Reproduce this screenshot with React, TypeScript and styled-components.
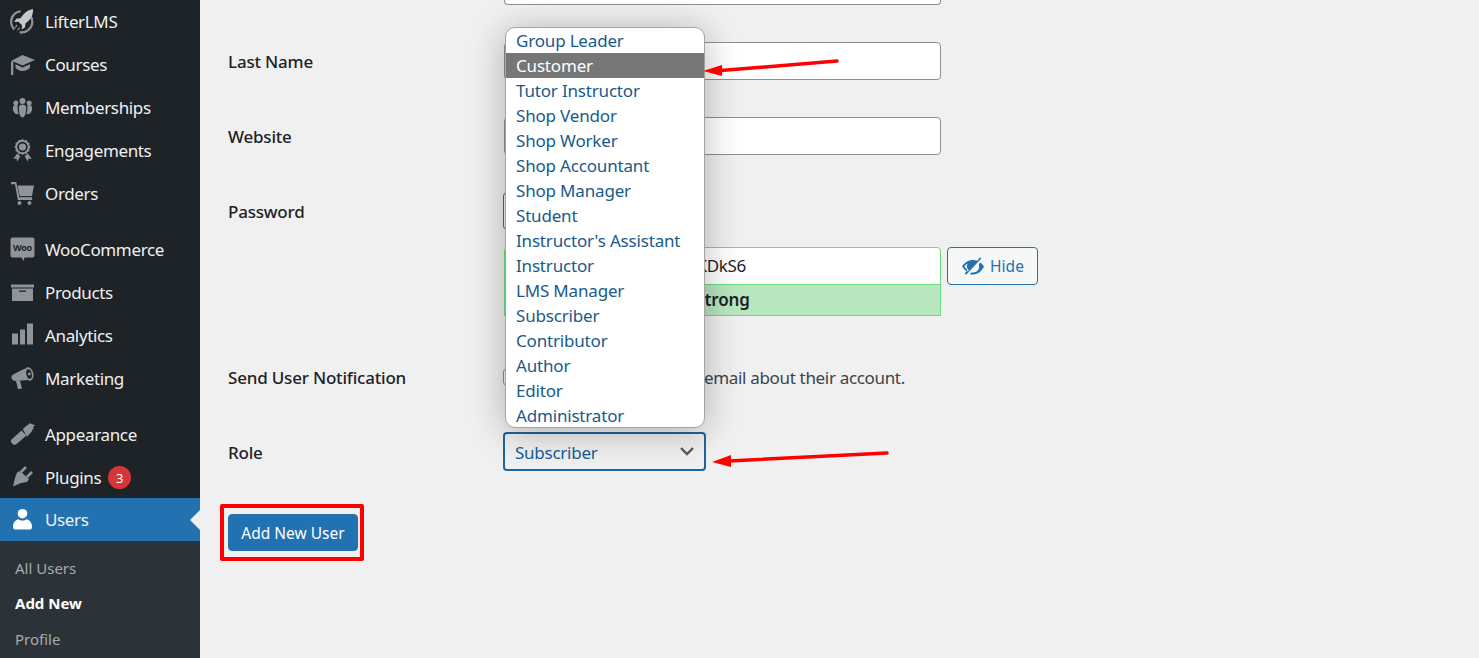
import React from "react";
import styled, { createGlobalStyle } from "styled-components";

const Global = createGlobalStyle`
  html, body { margin: 0; padding: 0; height: 658px; overflow: hidden; background: #f0f0f1; }
  body { font-family: "Noto Sans", "Open Sans", "Liberation Sans", sans-serif; }
  * { box-sizing: border-box; }
`;

const Page = styled.div`display: flex; height: 658px; overflow: hidden;`;
const Sidebar = styled.nav`width: 200px; flex: none; background: #1d2327; display: flex; flex-direction: column;`;
const Group = styled.ul`list-style: none; margin: 0 0 13px; padding: 0; display: flex; flex-direction: column;`;
const Item = styled.li<{ $active?: boolean }>`
  position: relative; height: 43px; display: flex; align-items: center; gap: 10px; padding-left: 10px;
  font-size: 17px; letter-spacing: -0.35px; color: #f0f0f1;
  background: ${p => (p.$active ? "#2271b1" : "transparent")};
  ${p => (p.$active ? "margin-top: -1px;" : "")}
  svg { flex: none; width: 25px; height: 25px; fill: ${p => (p.$active ? "#fff" : "#8f9499")}; }
  ${p => p.$active && `&::after { content: ""; position: absolute; right: 0; top: 12px; border: 10px solid transparent; border-right-color: #f0f0f1; border-left-width: 0; }`}
`;
const Badge = styled.span`
  width: 23px; height: 23px; margin-left: -3px; border-radius: 50%; background: #d63638; color: #fff;
  font-size: 13px; display: flex; align-items: center; justify-content: center; letter-spacing: 0;
`;
const SubMenu = styled.ul`list-style: none; margin: -13px 0 0; padding: 9px 0 0 15px; flex: 1; background: #2c3338;`;
const SubItem = styled.li<{ $current?: boolean }>`
  height: 35.5px; display: flex; align-items: center; font-size: 15px;
  color: ${p => (p.$current ? "#fff" : "#a7aaad")}; font-weight: ${p => (p.$current ? 700 : 400)};
`;

const Main = styled.main`position: relative; flex: 1; padding-left: 28px; display: flex; flex-direction: column;`;
const Row = styled.div<{ $mt?: number; $h?: number }>`
  display: grid; grid-template-columns: 275px 1fr; align-items: center;
  margin-top: ${p => p.$mt ?? 37}px; ${p => (p.$h ? `height: ${p.$h}px;` : "")}
`;
const Label = styled.label`font-size: 17px; font-weight: 500; color: #1d2327; letter-spacing: -0.2px;`;
const RoleLabel = styled(Label)`margin-top: 2px;`;
const CutInput = styled.div`margin-left: 276px; width: 437px; height: 5px; background: #fff; border: 1px solid #8c8f94; border-top: none; border-radius: 0 0 4px 4px;`;
const Input = styled.div`width: 437px; height: 38px; margin-left: 1px; background: #fff; border: 1px solid #8c8f94; border-radius: 4px;`;
const PasswordCell = styled.div`display: flex; flex-direction: column; align-self: start; padding-left: 1px;`;
const PasswordLabel = styled(Label)`align-self: start; margin-top: 8px;`;
const SetButton = styled.div`width: 180px; height: 38px; margin-left: -1px; border: 1px solid #2271b1; border-radius: 4px; background: #f6f7f7;`;
const PassLine = styled.div`display: flex; gap: 6px; margin-top: 17px;`;
const PassInput = styled.div`
  width: 437px; height: 38px; background: #fff; border: 1px solid #68de7c; border-radius: 4px 4px 0 0;
  font-size: 17px; line-height: 35px; color: #1d2327; white-space: nowrap; overflow: hidden; display: flex; justify-content: flex-end; padding-right: 194px;
  letter-spacing: -0.3px;
`;
const HideButton = styled.div`
  width: 91px; height: 38px; background: #f6f7f7; border: 1px solid #2271b1; border-radius: 4px; color: #2271b1;
  display: flex; align-items: center; justify-content: center; gap: 5px; font-size: 15.5px;
  svg { width: 24px; height: 24px; fill: #2271b1; }
`;
const Strength = styled.div`
  width: 437px; height: 31px; background: #b8e6bf; border: 1px solid #68de7c; border-top: none;
  font-size: 17px; font-weight: 600; color: #1d2327; text-align: center; line-height: 30px; letter-spacing: -0.1px;
`;
const CheckCell = styled.div`display: flex; align-items: center; font-size: 17px; color: #3c434a; letter-spacing: -0.33px;`;
const Checkbox = styled.span`width: 18px; height: 18px; margin-right: 183px; background: #fff; border: 1px solid #8c8f94; border-radius: 4px; flex: none;`;
const SelectWrap = styled.div`position: relative; width: 203px; height: 39px;`;
const Select = styled.div`
  height: 39px; border: 2px solid #1b66a0; border-radius: 4px; background: #f0f0f1; color: #135e96;
  display: flex; align-items: center; justify-content: space-between; padding: 1px 9px 0 10px; font-size: 17px; letter-spacing: -0.25px;
  svg { width: 16px; height: 16px; margin-top: -2px; stroke: #50575e; fill: none; stroke-width: 2.3; }
`;
const Dropdown = styled.ul`
  position: absolute; left: 2px; bottom: 43px; width: 200px; height: 401px; margin: 0; padding: 0; list-style: none; z-index: 5;
  background: #fff; border: 1px solid #a3a3a3; border-radius: 10px; overflow: hidden;
  box-shadow: 0 4px 36px rgba(0, 0, 0, 0.28);
`;
const Option = styled.li<{ $on?: boolean }>`
  height: 25px; padding-left: 10px; font-size: 17px; line-height: 25px; white-space: nowrap; letter-spacing: -0.18px;
  background: ${p => (p.$on ? "#767676" : "transparent")}; color: ${p => (p.$on ? "#fff" : "#185a8c")};
`;
const Submit = styled.button`
  position: relative; display: block; width: 130px; height: 37px; margin-top: 43px; padding: 0; border: 1px solid #2271b1; border-radius: 4px;
  background: #2271b1; color: #fff; font: 400 15.5px "Noto Sans", sans-serif; letter-spacing: 0;
  &::after { content: ""; position: absolute; inset: -11px -7px -11px -9px; border: 4px solid #f00; border-radius: 2px; }
`;
const Arrow = styled.svg<{ $x: number; $y: number }>`
  position: absolute; left: ${p => p.$x}px; top: ${p => p.$y}px; width: 190px; height: 24px; z-index: 6; overflow: visible;
`;

const DARK = "#1d2327";
const GREY = "#8f9499";

const icons: Record<string, React.ReactNode> = {
  rocket: (
    <>
      <circle cx="11.7" cy="12.8" r="10.6" fill="none" stroke={GREY} strokeWidth="2.2" strokeDasharray="26 6 24 12" transform="rotate(-40 11.7 12.8)" />
      <path fill="#c6c8ca" d="M23 0c-3.700.6-7 2.500-9.600 5.500L10.300 9.200 6.300 9.700 4.200 13l4.300-.3 3.500 3.500-.3 4.300 3.300-2.100.5-4 3.700-3.100C21.700 9 23.300 4.300 23 0z" />
      <path fill={GREY} d="M6.300 15.500l1.300 1.300-3.800 4zM9 18.200l1.200 1.200-3.800 3.200z" />
    </>
  ),
  cap: (
    <>
      <path d="M1 9 12.500 3 25 8 12.500 13.500 5 10.300z" />
      <path d="M5.500 12.300l7 3.200 7.500-3.200v3.200c-1.700 2.300-4.500 3.500-7.500 3.500s-5.500-1.200-7-3.200z" />
      <path d="M1 9.500h2.300V23H1z" />
    </>
  ),
  groups: (
    <>
      <circle cx="12.5" cy="6" r="3" />
      <circle cx="5.800" cy="8" r="2.500" />
      <circle cx="19.200" cy="8" r="2.500" />
      <path d="M8.800 12.500c0-2 1.700-3 3.700-3s3.700 1 3.700 3c0 4.500-1 10-3.700 10S8.800 17 8.800 12.500zM3 12c.5-1.300 1.700-1.900 3-1.900.8 0 1.300.2 1.700.4-.3 2.800 0 6.400 1 8.500-.6.300-1.300.3-2 .1C3.800 18.600 2.500 15 3 12zM22 12c-.5-1.300-1.700-1.900-3-1.900-.8 0-1.300.2-1.700.4.300 2.800 0 6.400-1 8.500.6.300 1.300.3 2 .1C21.200 18.600 22.500 15 22 12z" />
    </>
  ),
  award: (
    <>
      <path fillRule="evenodd" d="M12.500 1l1.800 1.300 2.200-.2 1 2 2 1-.2 2.200L20.600 9l-1.300 1.800.2 2.200-2 1-1 2-2.200-.2-1.800 1.300-1.800-1.300-2.200.2-1-2-2-1 .2-2.200L4.400 9l1.300-1.900-.2-2.200 2-1 1-2 2.200.2zM12.500 3.800a5.200 5.200 0 1 0 0 10.400 5.200 5.200 0 0 0 0-10.400z" />
      <circle cx="12.500" cy="9" r="3.600" />
      <path d="M7 15.800l1.200.2 1 1.800 1.500-.2-3.300 6-1-3.100-3.200.5zM18 15.800l-1.200.2-1 1.800-1.500-.2 3.300 6 1-3.100 3.200.5z" />
    </>
  ),
  cart: (
    <>
      <path d="M1 1h5.200l3.200 14.500H22v0l.2 3.500H7.800L5 3.200H1z" />
      <path d="M7.500 4.500H24l-2 10.500H9.800z" />
      <rect x="9" y="15.200" width="14" height="1" fill={DARK} />
      <circle cx="9.500" cy="22" r="2" />
      <circle cx="19.500" cy="22" r="2" />
    </>
  ),
  box: (
    <>
      <path d="M1 4.500h23v3H1zM2 8.500h21V21H2z" />
      <rect x="9" y="10.500" width="7" height="1.300" fill={DARK} />
    </>
  ),
  bars: (
    <>
      <rect x="2" y="10.500" width="6" height="11" />
      <rect x="10" y="6.500" width="5" height="15" />
      <rect x="17" y=".5" width="6" height="21" />
    </>
  ),
  mega: (
    <>
      <path d="M1.500 12C1.200 10 2.200 8.800 4 8L15 2.500 18 14 6 15C3.500 15 2 14 1.500 12z" />
      <path d="M6 15l4-.3 2 7.800-4 .8z" />
      <ellipse cx="19" cy="8" rx="4.400" ry="6.800" transform="rotate(-12 19 8)" />
      <ellipse cx="19" cy="8" rx="2.700" ry="4.800" transform="rotate(-12 19 8)" fill={DARK} />
      <circle cx="19.300" cy="8" r="1.400" />
    </>
  ),
  brush: (
    <>
      <path d="M1 18l10.500-9.500 5 5L6 22.500C5 23 3.800 23 3 22.200L1.300 20.500C.8 19.800.7 18.700 1 18z" />
      <path d="M12.800 7.300l3-3 4.200-3 5 2-2 2 1 1.500-1.500.5-.5 2-5 5.500z" />
    </>
  ),
  plug: (
    <>
      <path d="M3 21.500 5 13 7 7.500 10 6 19 14 17 17 11 18z" />
      <path d="M11 7l5-5M17 12l5-5" stroke={GREY} strokeWidth="2.600" fill="none" />
    </>
  ),
  user: (
    <>
      <circle cx="12.500" cy="6.700" r="4.800" />
      <path d="M3 20.500c-.3-4.500 2-7.300 5.300-8.300 2.200 1.700 6.200 1.700 8.400 0 3.300 1 5.600 3.800 5.300 8.300-.1.800-.8 2-2 2H5c-1.200 0-1.900-1.200-2-2z" />
    </>
  ),
};

const Icon = ({ n }: { n: string }) => <svg viewBox="0 0 25 25">{icons[n]}</svg>;
const WooIcon = () => (
  <svg viewBox="0 0 25 25">
    <path d="M2.500 .5h20a2 2 0 0 1 2 2v16a2 2 0 0 1-2 2h-8l-1 3.500-2-3.500h-9a2 2 0 0 1-2-2v-16a2 2 0 0 1 2-2z" />
    <text x="12.500" y="13.500" textAnchor="middle" fontSize="9" fontWeight="700" fill={DARK} fontFamily="Noto Sans, sans-serif" letterSpacing="-.3">Woo</text>
  </svg>
);

const groups: { n?: string; label: string; woo?: boolean }[][] = [
  [{ n: "rocket", label: "LifterLMS" }, { n: "cap", label: "Courses" }, { n: "groups", label: "Memberships" }, { n: "award", label: "Engagements" }, { n: "cart", label: "Orders" }],
  [{ woo: true, label: "WooCommerce" }, { n: "box", label: "Products" }, { n: "bars", label: "Analytics" }, { n: "mega", label: "Marketing" }],
];
const roles = ["Group Leader", "Customer", "Tutor Instructor", "Shop Vendor", "Shop Worker", "Shop Accountant", "Shop Manager", "Student", "Instructor's Assistant", "Instructor", "LMS Manager", "Subscriber", "Contributor", "Author", "Editor", "Administrator"];

export default function App() {
  return (
    <Page>
      <Global />
      <Sidebar>
        {groups.map((g, i) => (
          <Group key={i}>
            {g.map(it => (
              <Item key={it.label}>
                {it.woo ? <WooIcon /> : <Icon n={it.n!} />}
                <span>{it.label}</span>
              </Item>
            ))}
          </Group>
        ))}
        <Group>
          <Item><Icon n="brush" /><span>Appearance</span></Item>
          <Item><Icon n="plug" /><span>Plugins</span><Badge>3</Badge></Item>
          <Item $active><Icon n="user" /><span>Users</span></Item>
        </Group>
        <SubMenu>
          <SubItem>All Users</SubItem>
          <SubItem $current>Add New</SubItem>
          <SubItem>Profile</SubItem>
        </SubMenu>
      </Sidebar>
      <Main>
        <CutInput />
        <Row><Label>Last Name</Label><Input /></Row>
        <Row><Label>Website</Label><Input /></Row>
        <Row>
          <PasswordLabel>Password</PasswordLabel>
          <PasswordCell>
            <SetButton />
            <PassLine>
              <PassInput>KDkS6</PassInput>
              <HideButton>
                <svg viewBox="0 0 24 24">
                  <path fillRule="evenodd" d="M12 6c-4.500 0-8.500 2.600-11 6.500 1.200 1.900 2.700 3.400 4.600 4.600L3.800 19.500l1.400 1.300L20.200 4.500 19 3.300l-2.800 3.500C14.900 6.300 13.500 6 12 6zm-6.300 9.100A11 11 0 0 1 3.300 12.500c.9-1.300 2-2.300 3.300-3.100a6 6 0 0 0 1.300 7l-1.200 1.400zM23 12.500c-1-1.600-2.200-2.900-3.700-4L17.800 10.300a6 6 0 0 1-5.700 8.200h-1.900l-1.400 1.700c1 .2 2.100.3 3.200.3 4.500 0 8.500-3 11-8z" />
                </svg>
                Hide
              </HideButton>
            </PassLine>
            <Strength>Strong</Strength>
          </PasswordCell>
        </Row>
        <Row $mt={43} $h={36}>
          <Label>Send User Notification</Label>
          <CheckCell><Checkbox />email about their account.</CheckCell>
        </Row>
        <Row>
          <RoleLabel>Role</RoleLabel>
          <SelectWrap>
            <Dropdown>
              {roles.map(r => <Option key={r} $on={r === "Customer"}>{r}</Option>)}
            </Dropdown>
            <Select>
              Subscriber
              <svg viewBox="0 0 16 16"><path d="M2 5l6 6 6-6" /></svg>
            </Select>
          </SelectWrap>
        </Row>
        <Submit>Add New User</Submit>
        <Arrow $x={503} $y={55} viewBox="0 0 190 24"><path d="M134 6 18 15.500" stroke="#f00" strokeWidth="3.500" strokeLinecap="round" /><path d="M0 16 19 10 19 21z" fill="#f00" /></Arrow>
        <Arrow $x={512} $y={447} viewBox="0 0 190 24"><path d="M175 6 17 14" stroke="#f00" strokeWidth="3.500" strokeLinecap="round" /><path d="M0 15 19 8 19 20z" fill="#f00" /></Arrow>
      </Main>
    </Page>
  );
}
